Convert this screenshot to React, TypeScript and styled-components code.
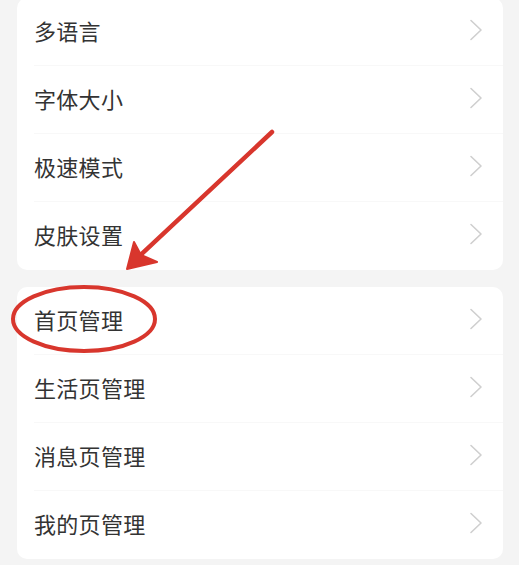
import React from "react";
import styled, { createGlobalStyle } from "styled-components";

const Global = createGlobalStyle`
  html, body {
    margin: 0;
    padding: 0;
    background: #f4f4f4;
  }
  body {
    font-family: "Noto Sans CJK SC", "Noto Sans", sans-serif;
  }
`;

const Page = styled.div`
  position: relative;
  width: 519px;
  height: 565px;
  overflow: hidden;
  background: #f4f4f4;
  display: flex;
  flex-direction: column;
  gap: 17px;
  padding: 0 16px 0 17px;
  box-sizing: border-box;
`;

const Card = styled.div<{ $first?: boolean }>`
  background: #ffffff;
  border-radius: 10px;
  margin-top: ${(p) => (p.$first ? "-2px" : "0")};
  display: flex;
  flex-direction: column;
  overflow: hidden;
`;

const Row = styled.div<{ $divider?: boolean }>`
  position: relative;
  height: 68px;
  display: flex;
  align-items: center;
  justify-content: space-between;
  padding: 0 20px 4px 17px;
  box-sizing: border-box;
  ${(p) =>
    p.$divider
      ? `&::after {
    content: "";
    position: absolute;
    left: 17px;
    right: 0;
    bottom: 0;
    height: 1px;
    background: #f8f8f8;
  }`
      : ""}
`;

const Label = styled.span`
  font-size: 22px;
  color: #333333;
  letter-spacing: 0.3px;
  line-height: 1;
`;

const Chevron = styled.svg`
  width: 14px;
  height: 22px;
  flex: none;
`;

const Overlay = styled.svg`
  position: absolute;
  left: 0;
  top: 0;
  width: 519px;
  height: 565px;
  pointer-events: none;
`;

const ChevronIcon = () => (
  <Chevron viewBox="0 0 14 22">
    <path d="M2 1.5 L12 11 L2 20.5" fill="none" stroke="#cfcfcf" strokeWidth="1.6" strokeLinecap="round" strokeLinejoin="round" />
  </Chevron>
);

const group1 = ["多语言", "字体大小", "极速模式", "皮肤设置"];
const group2 = ["首页管理", "生活页管理", "消息页管理", "我的页管理"];

const Group = ({ items, first }: { items: string[]; first?: boolean }) => (
  <Card $first={first}>
    {items.map((t, i) => (
      <Row key={t} $divider={i < items.length - 1}>
        <Label>{t}</Label>
        <ChevronIcon />
      </Row>
    ))}
  </Card>
);

export default function App() {
  return (
    <>
      <Global />
      <Page>
        <Group items={group1} first />
        <Group items={group2} />
        <Overlay viewBox="0 0 519 565">
          <ellipse cx="84" cy="319" rx="71" ry="32" fill="none" stroke="#d8362d" strokeWidth="4" />
          <line x1="272" y1="132" x2="132" y2="263" stroke="#d8362d" strokeWidth="4.5" strokeLinecap="round" />
          <path d="M127 269 L134 242 L141 255 L157 262 Z" fill="#d8362d" stroke="#d8362d" strokeWidth="2" strokeLinejoin="round" />
        </Overlay>
      </Page>
    </>
  );
}
